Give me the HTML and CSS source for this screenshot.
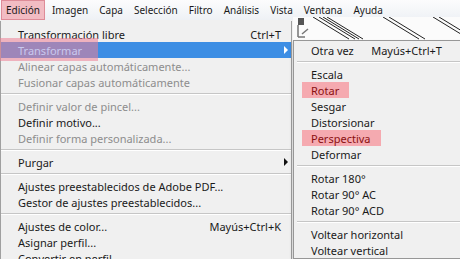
FILE: index.html
```html
<!DOCTYPE html>
<html lang="es">
<head>
    <meta charset="UTF-8">
    <title>Edición - Transformar</title>
    <link rel="stylesheet" href="styles.css">
</head>
<body>

<div class="menubar">
    <span class="top-item marked">Edición</span>
    <span class="top-item">Imagen</span>
    <span class="top-item">Capa</span>
    <span class="top-item">Selección</span>
    <span class="top-item">Filtro</span>
    <span class="top-item">Análisis</span>
    <span class="top-item">Vista</span>
    <span class="top-item">Ventana</span>
    <span class="top-item">Ayuda</span>
</div>

<div class="stage">
    <svg class="canvas" width="170" height="26" viewBox="0 0 170 26">
        <rect x="0" y="0" width="170" height="26" fill="#fbfbfb"/>
        <rect x="5" y="1" width="6" height="7" fill="#555"/>
        <path d="M5 8 v12 M5 20 h7 M9 17 l6 -5" stroke="#777" stroke-width="1.5" fill="none"/>
        <path d="M20 0 l36 22 M26 0 l36 22 M30 0 l36 22 M34 0 l36 22 M90 0 l36 22 M96 0 l36 22 M140 0 l36 22 M146 0 l36 22" stroke="#222" stroke-width="1" fill="none"/>
    </svg>

    <div class="menu main-menu">
        <div class="item"><span>Transformación libre</span><span class="key">Ctrl+T</span></div>
        <div class="item active">
            <span class="mark-band"></span>
            <span class="label">Transformar</span><span class="arrow white"></span>
        </div>
        <div class="item off">Alinear capas automáticamente...</div>
        <div class="item off">Fusionar capas automáticamente</div>
        <div class="sep"></div>
        <div class="item off">Definir valor de pincel...</div>
        <div class="item">Definir motivo...</div>
        <div class="item off">Definir forma personalizada...</div>
        <div class="sep"></div>
        <div class="item"><span>Purgar</span><span class="arrow"></span></div>
        <div class="sep"></div>
        <div class="item">Ajustes preestablecidos de Adobe PDF...</div>
        <div class="item">Gestor de ajustes preestablecidos...</div>
        <div class="sep"></div>
        <div class="item"><span>Ajustes de color...</span><span class="key">Mayús+Ctrl+K</span></div>
        <div class="item">Asignar perfil...</div>
        <div class="item">Convertir en perfil...</div>
    </div>

    <div class="menu sub-menu">
        <div class="item"><span>Otra vez</span><span class="key">Mayús+Ctrl+T</span></div>
        <div class="sep"></div>
        <div class="item">Escala</div>
        <div class="item"><span class="pink">Rotar</span></div>
        <div class="item">Sesgar</div>
        <div class="item">Distorsionar</div>
        <div class="item"><span class="pink">Perspectiva</span></div>
        <div class="item">Deformar</div>
        <div class="sep"></div>
        <div class="item">Rotar 180°</div>
        <div class="item">Rotar 90° AC</div>
        <div class="item">Rotar 90° ACD</div>
        <div class="sep"></div>
        <div class="item">Voltear horizontal</div>
        <div class="item">Voltear vertical</div>
    </div>
</div>

</body>
</html>
```

FILE: styles.css
```css
body {
    margin: 0;
    width: 460px;
    height: 259px;
    overflow: hidden;
    font-family: "Noto Sans", "Open Sans", sans-serif;
    font-size: 11px;
    color: #1a1a1a;
    background: #f0f0f0;
}
.menubar {
    display: flex;
    height: 20px;
    align-items: center;
    padding-left: 1px;
    font-size: 10px;
    background: linear-gradient(#fcfcfd, #eef1f5);
    box-sizing: border-box;
}
.top-item {
    padding: 0 4px;
    margin-right: 1px;
    line-height: 18px;
    border: 1px solid transparent;
}
.top-item.marked {
    padding: 0 4px;
    margin-right: 2px;
    background: #f2bcc3;
    border-color: #de8c98;
}
.stage {
    position: relative;
    height: 239px;
}
.canvas {
    position: absolute;
    left: 293px;
    top: -3px;
}
.menu {
    position: absolute;
    background: #f0f0f0;
    box-sizing: border-box;
}
.main-menu {
    left: 0;
    top: 1px;
    width: 292px;
    padding-top: 5px;
    border-left: 1px solid #a0a0a0;
    border-right: 1px solid #a0a0a0;
}
.sub-menu {
    left: 293px;
    top: 20px;
    width: 180px;
    padding-top: 1px;
    border: 1px solid #979797;
    box-shadow: -1px 2px 3px rgba(0, 0, 0, 0.15);
}
.item {
    position: relative;
    display: flex;
    justify-content: space-between;
    align-items: center;
    height: 16px;
    padding: 0 10px 0 17px;
    white-space: nowrap;
}
.sub-menu .item {
    padding-right: 30px;
}
.item.off {
    color: #8d8d8d;
}
.item.active {
    background: #3d8ee4;
    color: #c9c9ee;
}
.mark-band {
    position: absolute;
    left: -1px;
    top: -4px;
    width: 98px;
    height: 23px;
    background: rgba(238, 128, 150, 0.55);
}
.item.active .label {
    position: relative;
}
.sep {
    height: 1px;
    margin: 3px 0 3px 0;
    background: #c6c6c6;
    border-bottom: 1px solid #fff;
}
.sub-menu .sep {
    margin: 3px 4px 3px 3px;
}
.arrow {
    width: 0;
    height: 0;
    margin-right: -7px;
    border-top: 4px solid transparent;
    border-bottom: 4px solid transparent;
    border-left: 4px solid #111;
}
.arrow.white {
    border-left-color: #fff;
}
.pink {
    display: flex;
    align-items: center;
    height: 16px;
    margin-left: -9px;
    padding: 0 10px 0 9px;
    background: #f5aab0;
    color: #8a1010;
}
```
